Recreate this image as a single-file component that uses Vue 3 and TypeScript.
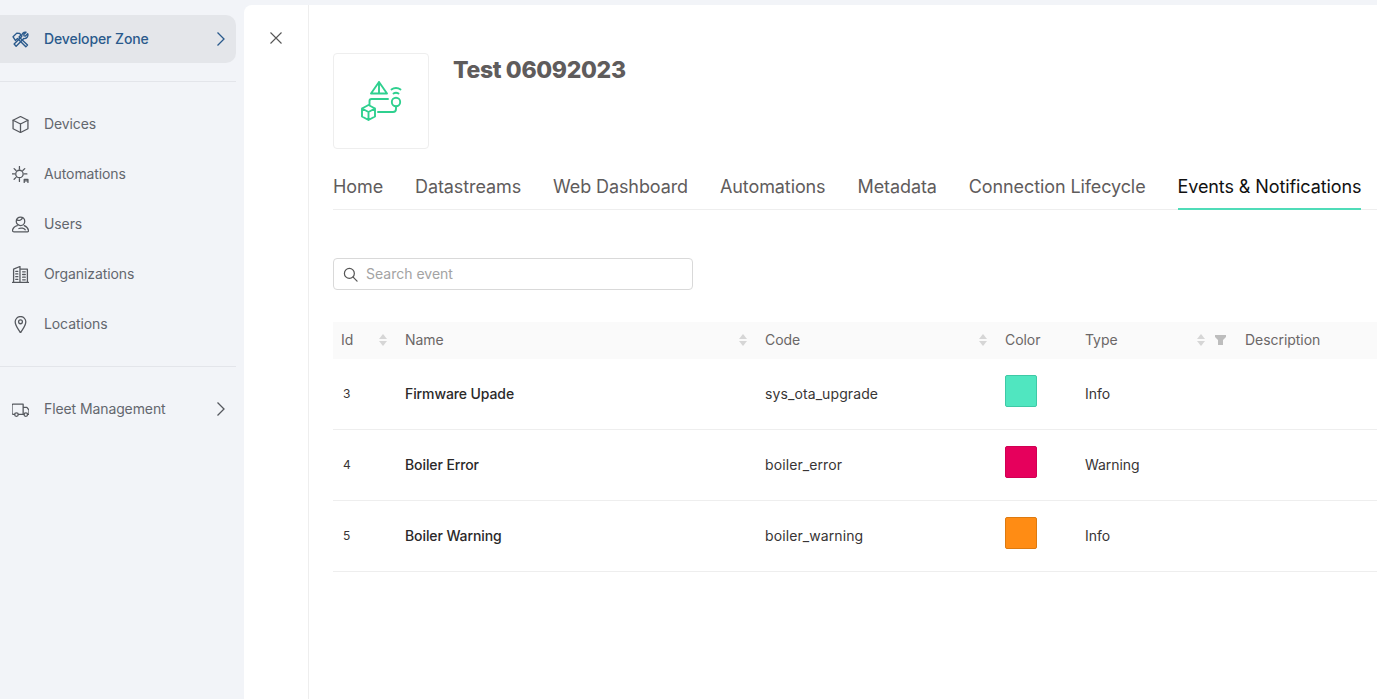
<script setup lang="ts">
type NavItem = { label: string; icon: string }
type EventRow = { id: number; name: string; code: string; color: string; border: string; type: string }

const mainNav: NavItem[] = [
  { label: 'Devices', icon: 'box' },
  { label: 'Automations', icon: 'sun' },
  { label: 'Users', icon: 'user' },
  { label: 'Organizations', icon: 'org' },
  { label: 'Locations', icon: 'pin' }
]

const tabs = ['Home', 'Datastreams', 'Web Dashboard', 'Automations', 'Metadata', 'Connection Lifecycle', 'Events & Notifications']

const rows: EventRow[] = [
  { id: 3, name: 'Firmware Upade', code: 'sys_ota_upgrade', color: '#50e6c0', border: '#3fc9a6', type: 'Info' },
  { id: 4, name: 'Boiler Error', code: 'boiler_error', color: '#e6005c', border: '#d00053', type: 'Warning' },
  { id: 5, name: 'Boiler Warning', code: 'boiler_warning', color: '#ff8c14', border: '#dd7a10', type: 'Info' }
]
</script>

<template>
  <div class="page">
    <aside class="sidebar">
      <div class="nav-item active">
        <svg class="nav-icon" viewBox="1 1 16 16" fill="none" stroke="currentColor" stroke-width="1.3" stroke-linejoin="round" stroke-linecap="round">
          <path d="M2 6.500 5.500 3l2.500.2 1.500 1.500L7.600 6.600l8 7.600-1.600 1.600-7.800-7.800-2 1.900z" />
          <path d="M15.800 3.600 13.600 5.800l-1.300-.2-.2-1.300 2.100-2.100a3.400 3.400 0 0 0-4 3.900L3 13.200 4.900 15.400l7.200-7.300a3.400 3.400 0 0 0 3.700-4.500z" />
        </svg>
        <span class="nav-label">Developer Zone</span>
        <svg class="chevron" viewBox="0 0 10 16" fill="none" stroke="currentColor" stroke-width="1.3"><path d="M1.500 1.500 8 8l-6.500 6.500" /></svg>
      </div>
      <div class="divider first"></div>

      <div v-for="item in mainNav" :key="item.label" class="nav-item">
        <svg class="nav-icon" viewBox="1 1 16 16" fill="none" stroke="#55585e" stroke-width="1.2" stroke-linejoin="round" stroke-linecap="round">
          <template v-if="item.icon === 'box'">
            <path d="M9 1.500 16 5v8l-7 3.500L2 13V5z" />
            <path d="M2 5l7 3.500L16 5M9 8.500v8" />
          </template>
          <template v-else-if="item.icon === 'sun'">
            <circle cx="8" cy="8.500" r="3.500" />
            <path d="M8 1.500v2.500M1 8.500h2.500M12.500 8.500H15M3 3.500l1.800 1.800M13 3.500l-1.800 1.800M3 13.500l1.800-1.800M8 13v2.500" />
            <path d="M12.500 16.500v-3h3.500v3M12.500 15h3.500" />
          </template>
          <template v-else-if="item.icon === 'user'">
            <circle cx="9" cy="6" r="4" />
            <path d="M5.500 4.500c2 1.500 4.500.5 5.500-2" />
            <path d="M6 10c-2 .5-4 2-4.500 4.300-.2 1 .5 1.700 1.500 1.700h12.500c.8 0 1.200-.7 1-1.500-.4-2-2-3.700-4-4.500" />
            <path d="M7.500 12.800c2-1 5-.2 6 1.200" />
          </template>
          <template v-else-if="item.icon === 'org'">
            <path d="M1.500 16.500h15M2.500 16.500V4l6-2.500v15M8.500 4h7v12.500" />
            <path d="M4.500 6h2M4.500 8.500h2M4.500 11h2M4.500 13.500h2M11 6.500h2.500M11 9h2.500M11 11.500h2.500M11 14h2.500" />
          </template>
          <template v-else>
            <path d="M9 17c-1.500-3-5-6.500-5-10.500a5 5 0 0 1 10 0C14 10.500 10.500 14 9 17z" />
            <circle cx="9" cy="6.500" r="1.800" />
          </template>
        </svg>
        <span class="nav-label">{{ item.label }}</span>
      </div>

      <div class="divider second"></div>

      <div class="nav-item">
        <svg class="nav-icon" viewBox="1 1 16 16" fill="none" stroke="#55585e" stroke-width="1.2" stroke-linejoin="round" stroke-linecap="round">
          <path d="M3.500 13.500H2a1 1 0 0 1-1-1V5a1 1 0 0 1 1-1h9.500v9.500H7M11.500 7H15l2 2.500v4h-1.500M11.500 13.500h.8" />
          <circle cx="5.200" cy="13.800" r="1.700" />
          <circle cx="14" cy="13.800" r="1.700" />
        </svg>
        <span class="nav-label">Fleet Management</span>
        <svg class="chevron" viewBox="0 0 10 16" fill="none" stroke="#55585e" stroke-width="1.3"><path d="M1.500 1.500 8 8l-6.500 6.500" /></svg>
      </div>
    </aside>

    <main class="panel">
      <div class="close-col">
        <svg class="close" viewBox="0 0 12 12" fill="none" stroke="#555" stroke-width="1.1"><path d="M.5.500l11 11M11.500.500l-11 11" /></svg>
      </div>

      <section class="content">
        <header class="product">
          <div class="logo">
            <svg viewBox="0 0 42 42" width="42" height="42" fill="none" stroke="#2fd08f" stroke-width="1.900" stroke-linejoin="round" stroke-linecap="round">
              <path d="M19 2 11 13.500H27zM19 2v11.500" />
              <path d="M31.500 9.500c2.500-2 6.500-2 9 0M33.500 13.500c1.500-1 3.500-1 5 0" />
              <circle cx="36" cy="22" r="4.200" />
              <path d="M9.500 24.500v-3.500a2 2 0 0 1 2-2H28" />
              <path d="M8.500 25l6.500 3.500v8L8.500 40 2 36.500v-8zM2 28.500 8.500 32l6.500-3.500M8.500 32v8" />
              <path d="M18 32h15a3 3 0 0 0 3-3v-2.500" />
            </svg>
          </div>
          <h1 class="title">Test 06092023</h1>
        </header>

        <nav class="tabs">
          <span v-for="tab in tabs" :key="tab" class="tab" :class="{ selected: tab === 'Events & Notifications' }">{{ tab }}</span>
        </nav>

        <div class="search">
          <svg class="search-icon" viewBox="0 0 16 16" fill="none" stroke="#555" stroke-width="1.300" stroke-linecap="round"><circle cx="6.800" cy="6.800" r="5.300" /><path d="M10.800 10.800 15 15" /></svg>
          <input class="search-input" type="text" placeholder="Search event" />
        </div>

        <div class="table">
          <div class="row head">
            <div class="cell sortable">Id<span class="sort"><i class="up"></i><i class="down"></i></span></div>
            <div class="cell sortable">Name<span class="sort"><i class="up"></i><i class="down"></i></span></div>
            <div class="cell sortable">Code<span class="sort"><i class="up"></i><i class="down"></i></span></div>
            <div class="cell">Color</div>
            <div class="cell sortable">Type
              <span class="sort typed"><i class="up"></i><i class="down"></i></span>
              <svg class="filter" viewBox="0 0 11 10" fill="#bdbdbd"><path d="M0 0h11v2L8 5v5H3V5L0 2z" /></svg>
            </div>
            <div class="cell">Description</div>
          </div>
          <div v-for="row in rows" :key="row.id" class="row body">
            <div class="cell id">{{ row.id }}</div>
            <div class="cell name">{{ row.name }}</div>
            <div class="cell code">{{ row.code }}</div>
            <div class="cell">
              <span class="swatch" :style="{ background: row.color, borderColor: row.border }"></span>
            </div>
            <div class="cell">{{ row.type }}</div>
            <div class="cell"></div>
          </div>
        </div>
      </section>
    </main>
  </div>
</template>

<style>
html,
body {
  margin: 0;
  overflow: hidden;
  background: #f2f4f8;
}
</style>

<style scoped>
.page {
  display: flex;
  width: 1377px;
  height: 699px;
  overflow: hidden;
  background: #f2f4f8;
  font-family: Inter, "Liberation Sans", sans-serif;
  color: #5f5c5c;
}

.sidebar {
  flex: 0 0 244px;
  box-sizing: border-box;
  padding: 15px 8px 0 0;
}

.nav-item {
  display: flex;
  align-items: center;
  height: 50px;
  padding: 0 10px 0 12px;
  font-size: 14px;
  letter-spacing: -0.1px;
  color: #63676e;
}

.nav-item.active {
  height: 48px;
  background: #e4e6ea;
  border-radius: 0 10px 10px 0;
  color: #2a5a8c;
  font-weight: 500;
}

.nav-icon {
  flex: 0 0 17px;
  width: 17px;
  height: 17px;
  margin-right: 15px;
}

.nav-label {
  flex: 1;
  padding-bottom: 2px;
}

.chevron {
  width: 10px;
  height: 16px;
}

.divider {
  height: 1px;
  background: #e3e5ea;
}

.divider.first {
  margin: 18px 0 17px;
}

.divider.second {
  margin: 17px 0 17px;
}

.panel {
  flex: 1;
  display: flex;
  min-width: 0;
  margin-top: 5px;
  background: #fff;
  border-top-left-radius: 8px;
}

.close-col {
  flex: 0 0 65px;
  box-sizing: border-box;
  padding: 27px 0 0 26px;
  border-right: 1px solid #eee;
}

.close {
  display: block;
  width: 12px;
  height: 12px;
}

.content {
  flex: 1;
  min-width: 0;
  padding: 48px 0 0 24px;
}

.product {
  display: flex;
  gap: 24px;
}

.logo {
  display: flex;
  align-items: center;
  justify-content: center;
  width: 96px;
  height: 96px;
  box-sizing: border-box;
  border: 1px solid #eee;
  border-radius: 4px;
}

.title {
  margin: 1px 0 0;
  font-size: 23px;
  line-height: 32px;
  font-weight: 800;
  letter-spacing: -0.35px;
  color: #5f5c5c;
}

.tabs {
  display: flex;
  gap: 32px;
  height: 61px;
  box-sizing: border-box;
  border-bottom: 1px solid #eee;
}

.tab {
  display: flex;
  align-items: center;
  box-sizing: border-box;
  height: 61px;
  padding-top: 14px;
  font-size: 18px;
  letter-spacing: -0.1px;
  color: #5f5c5c;
  white-space: nowrap;
}

.tab.selected {
  padding-top: 16px;
  color: #111;
  border-bottom: 2px solid #4fdcb8;
}

.search {
  display: flex;
  align-items: center;
  box-sizing: border-box;
  width: 360px;
  height: 32px;
  margin-top: 48px;
  padding: 0 11px 0 9px;
  border: 1px solid #d9d9d9;
  border-radius: 4px;
}

.search-icon {
  flex: 0 0 15px;
  width: 15px;
  height: 15px;
  margin-right: 8px;
}

.search-input {
  flex: 1;
  min-width: 0;
  padding: 0 0 2px;
  border: none;
  outline: none;
  background: transparent;
  font: inherit;
  font-size: 14px;
  color: #333;
}

.search-input::placeholder {
  color: #a3a3a3;
  opacity: 1;
}

.table {
  margin-top: 32px;
  font-size: 14px;
  letter-spacing: -0.05px;
}

.row {
  display: grid;
  grid-template-columns: 64px 360px 240px 80px 160px 1fr;
  align-items: center;
}

.row.head {
  height: 37px;
  box-sizing: border-box;
  padding-bottom: 2px;
  background: #fafafa;
  color: #6b6767;
}

.row.body {
  height: 71px;
  box-sizing: border-box;
  padding-bottom: 2px;
  border-bottom: 1px solid #eee;
  color: #383535;
}

.cell {
  padding: 0 8px;
  min-width: 0;
  white-space: nowrap;
}

.sortable {
  position: relative;
}

.sort {
  position: absolute;
  top: 50%;
  right: 10px;
  display: flex;
  flex-direction: column;
  gap: 2px;
  transform: translateY(-50%);
}

.sort.typed {
  right: 32px;
}

.sort i {
  display: block;
  width: 0;
  height: 0;
  border-left: 4px solid transparent;
  border-right: 4px solid transparent;
}

.sort .up {
  border-bottom: 5px solid #d6d6d6;
}

.sort .down {
  border-top: 5px solid #d6d6d6;
}

.filter {
  position: absolute;
  top: 50%;
  right: 11px;
  width: 11px;
  height: 10px;
  transform: translateY(-50%);
}

.id {
  padding-left: 10px;
  font-size: 12px;
}

.name {
  font-weight: 500;
  letter-spacing: -0.1px;
  color: #2b2929;
}

.code {
  letter-spacing: 0.1px;
}

.swatch {
  display: block;
  box-sizing: border-box;
  width: 32px;
  height: 32px;
  margin-bottom: 4px;
  border: 1px solid;
  border-radius: 2px;
}
</style>
